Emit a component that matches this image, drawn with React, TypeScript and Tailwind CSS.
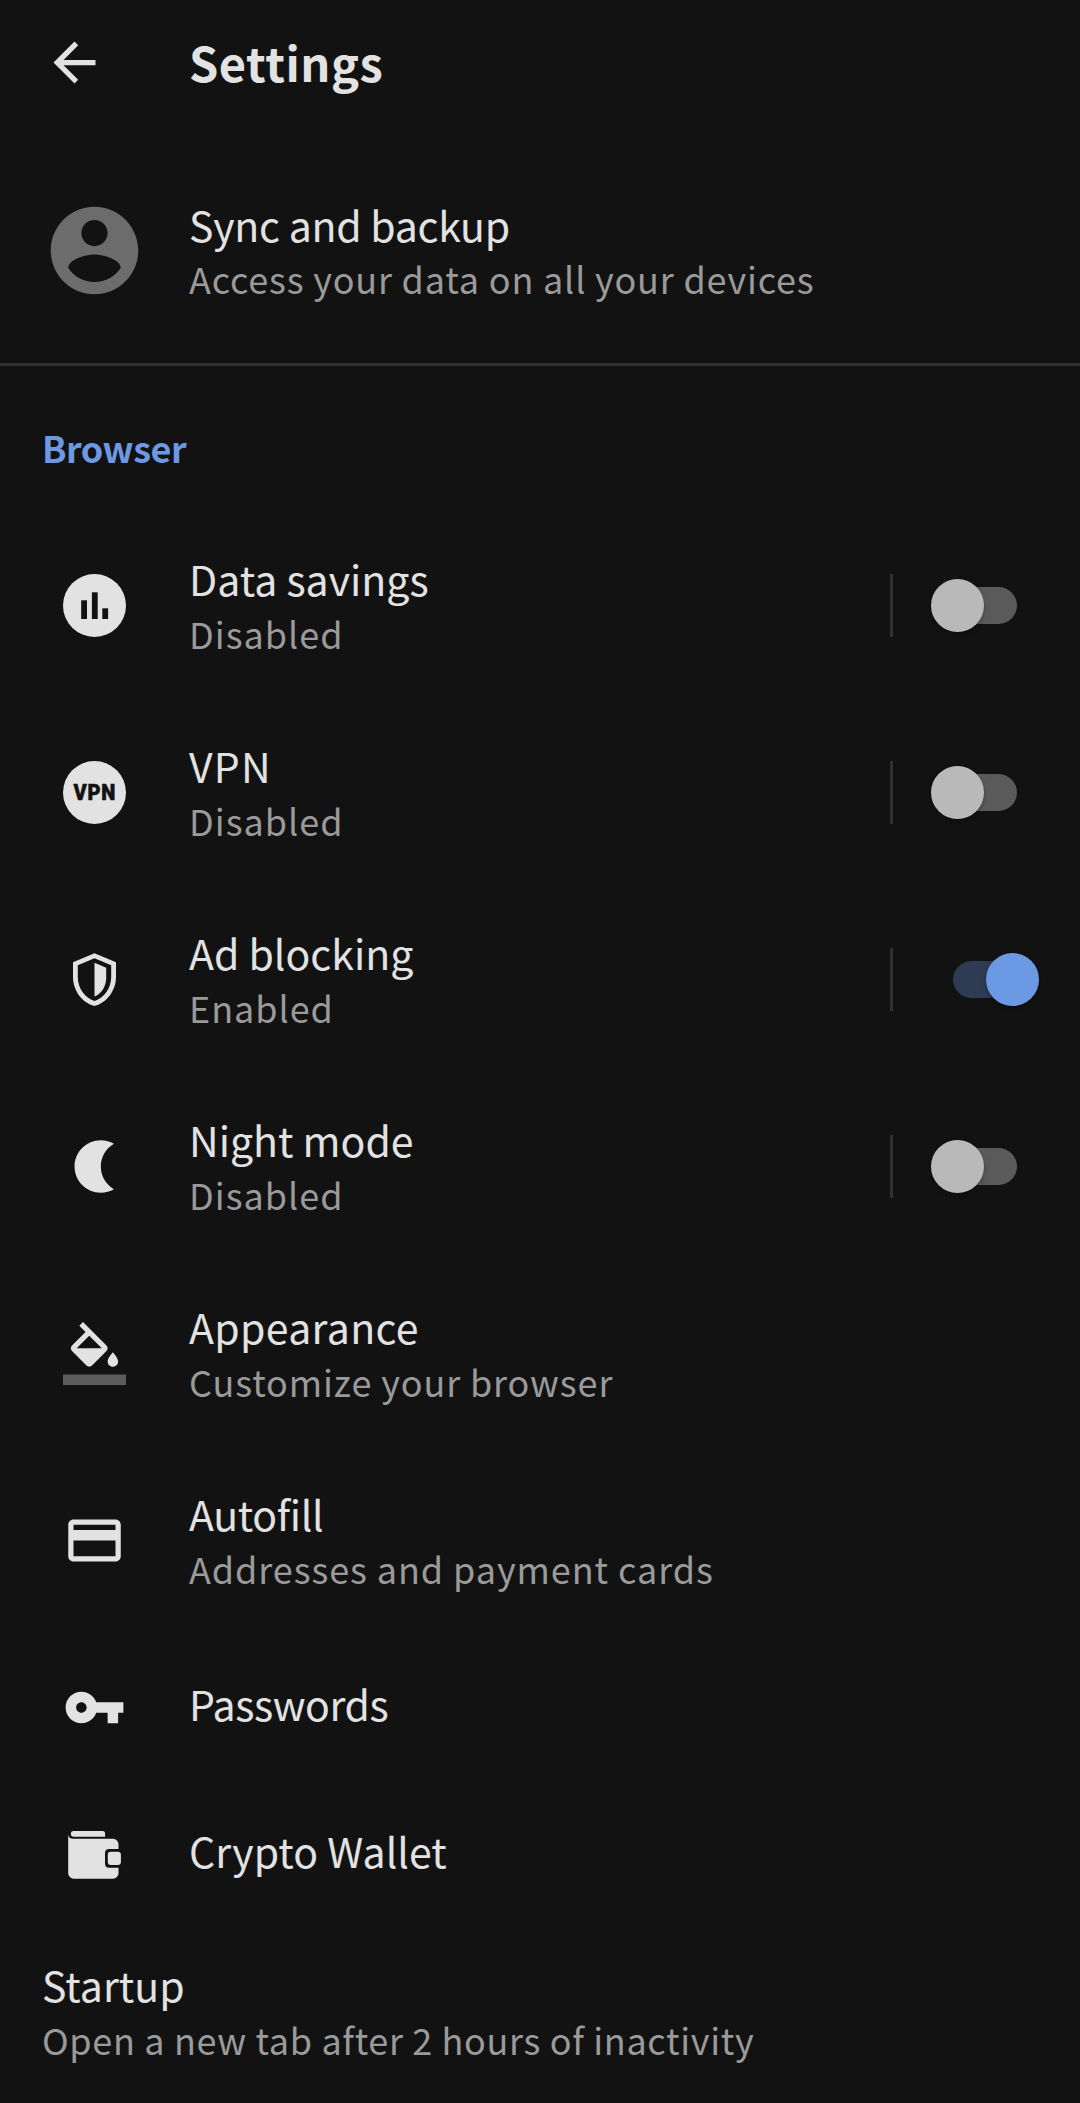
import type { ReactNode } from "react";

const INK = "#e2e2e2";

function Glyph({ d }: { d: string }) {
  return (
    <svg viewBox="0 0 24 24" className="size-[63px]" fill={INK}>
      <path d={d} />
    </svg>
  );
}

const BarsIcon = () => (
  <svg viewBox="0 0 63 63" className="size-[63px]">
    <circle cx="31.5" cy="31.5" r="31.5" fill={INK} />
    <g fill="#121212">
      <rect x="18.2" y="26.3" width="5.8" height="18.7" />
      <rect x="28.9" y="18.3" width="5.8" height="26.7" />
      <rect x="39.3" y="34.3" width="5.8" height="10.7" />
    </g>
  </svg>
);

const VpnIcon = () => (
  <div className="flex size-[63px] items-center justify-center rounded-full bg-[#e2e2e2] pl-px font-['Roboto',sans-serif] text-[21.5px] leading-none font-black tracking-[0.8px] text-[#121212] [-webkit-text-stroke:0.6px_#121212]">
    <span className="inline-block scale-x-93">VPN</span>
  </div>
);

const ShieldIcon = () => (
  <svg viewBox="0 0 63 63" className="size-[63px]" fill={INK}>
    <path
      fillRule="evenodd"
      d="M31.5 5.3 53 14.2V29C53 42.5 43.8 55 31.5 58 19.2 55 10 42.5 10 29V14.2ZM31.5 10.2 14.8 17.3V29C14.8 40 21.8 50 31.5 53 41.2 50 48.2 40 48.2 29V17.3Z"
    />
    <path d="M31.5 14.7 43.2 19.8V29.5C43.2 38 38.8 45.8 31.5 48.5Z" />
  </svg>
);

const MoonIcon = () => (
  <Glyph d="M14.4 2c1.82 0 3.53.5 5 1.35-2.99 1.73-5 4.95-5 8.65s2.01 6.92 5 8.65c-1.47.85-3.18 1.35-5 1.35-5.52 0-10-4.48-10-10s4.48-10 10-10z" />
);

const FillIcon = () => (
  <svg viewBox="0 0 24 24" className="size-[63px]" fill={INK}>
    <path d="M16.56 8.94L7.62 0 6.21 1.41l2.38 2.38-5.15 5.15c-.59.59-.59 1.54 0 2.12l5.5 5.5c.29.29.68.44 1.06.44s.77-.15 1.06-.44l5.5-5.5c.59-.58.59-1.53 0-2.12zM5.21 10L10 5.21 14.79 10H5.21zM19 11.5s-2 2.17-2 3.5c0 1.1.9 2 2 2s2-.9 2-2c0-1.33-2-3.5-2-3.5z" />
    <path d="M0 20h24v4H0z" fill="#5c5c5c" />
  </svg>
);

const CardIcon = () => (
  <Glyph d="M20 4H4c-1.11 0-1.99.89-1.99 2L2 18c0 1.11.89 2 2 2h16c1.11 0 2-.89 2-2V6c0-1.11-.89-2-2-2zm0 14H4v-6h16v6zm0-10H4V6h16v2z" />
);

const KeyIcon = () => (
  <Glyph d="M12.65 10C11.83 7.67 9.61 6 7 6c-3.31 0-6 2.69-6 6s2.69 6 6 6c2.61 0 4.83-1.67 5.65-4H17v4h4v-4h2v-4H12.65zM7 14c-1.1 0-2-.9-2-2s.9-2 2-2 2 .9 2 2-.9 2-2 2z" />
);

const WalletIcon = () => (
  <svg viewBox="0 0 63 63" className="size-[63px]" fill={INK}>
    <path d="M10.7 8H39.5a2.6 2.6 0 0 1 2.6 2.6V13.7H10.7a2.85 2.85 0 0 1 0-5.7Z" />
    <path d="M5.2 11.5C5.6 14.4 7.4 15.8 10 15.8H50a5.5 5.5 0 0 1 5.5 5.5V26H46a4 4 0 0 0-4 4V40.7a4 4 0 0 0 4 4H55.5V50.2A5.5 5.5 0 0 1 50 55.7H10.7A5.5 5.5 0 0 1 5.2 50.2Z" />
    <rect x="44.8" y="28.8" width="13.1" height="13.2" rx="3" />
  </svg>
);

function Toggle({ on }: { on: boolean }) {
  return (
    <div className="flex items-center">
      <div className="h-[63px] w-[3px] bg-[#303030]" />
      <div
        className={
          on
            ? "ml-[60px] flex h-[37px] w-[86px] items-center justify-end rounded-l-full bg-linear-to-r from-[#2e3b53] from-75% to-transparent to-75%"
            : "ml-[38px] flex h-[37px] w-[86px] items-center rounded-r-full bg-linear-to-r from-transparent from-25% to-[#5a5a5a] to-25%"
        }
      >
        <div
          className={
            on
              ? "size-[53px] shrink-0 rounded-full bg-[#6b99e4] shadow-[0_2px_4px_rgba(0,0,0,0.3)]"
              : "size-[53px] shrink-0 rounded-full bg-[#b9b9b9] shadow-[0_2px_4px_rgba(0,0,0,0.3)]"
          }
        />
      </div>
    </div>
  );
}

const Title = ({ text, className }: { text: string; className: string }) => (
  <div className={`text-[41px] leading-[54px] text-[#e2e2e2] ${className}`}>{text}</div>
);

const Sub = ({ text, className }: { text: string; className: string }) => (
  <div className={`text-[36px] leading-[54px] text-[#9a9a9a] ${className}`}>{text}</div>
);

type Item = {
  icon: ReactNode;
  title: string;
  titleClass: string;
  sub?: string;
  subClass?: string;
  on?: boolean;
};

const items: Item[] = [
  { icon: <BarsIcon />, title: "Data savings", titleClass: "", sub: "Disabled", subClass: "mt-px tracking-[1px]", on: false },
  { icon: <VpnIcon />, title: "VPN", titleClass: "tracking-[1.2px]", sub: "Disabled", subClass: "mt-px tracking-[1px]", on: false },
  { icon: <ShieldIcon />, title: "Ad blocking", titleClass: "", sub: "Enabled", subClass: "mt-px tracking-[0.95px]", on: true },
  { icon: <MoonIcon />, title: "Night mode", titleClass: "", sub: "Disabled", subClass: "mt-px tracking-[1px]", on: false },
  { icon: <FillIcon />, title: "Appearance", titleClass: "tracking-[0.34px]", sub: "Customize your browser", subClass: "mt-px tracking-[0.89px]" },
  { icon: <CardIcon />, title: "Autofill", titleClass: "tracking-[-0.35px]", sub: "Addresses and payment cards", subClass: "mt-px tracking-[0.92px]" },
  { icon: <KeyIcon />, title: "Passwords", titleClass: "tracking-[-0.42px]" },
  { icon: <WalletIcon />, title: "Crypto Wallet", titleClass: "tracking-[0.02px]" },
];

function Row({ item }: { item: Item }) {
  return (
    <li className={item.sub ? "flex h-[187px]" : "flex h-[147px]"}>
      <div className="flex w-[189px] shrink-0 items-center justify-center">{item.icon}</div>
      <div className={item.sub ? "grow pt-[39px]" : "grow pt-[42px]"}>
        <Title text={item.title} className={item.titleClass} />
        {item.sub && <Sub text={item.sub} className={item.subClass ?? ""} />}
      </div>
      {item.on !== undefined && (
        <div className="flex w-[190px] shrink-0 items-center">
          <Toggle on={item.on} />
        </div>
      )}
    </li>
  );
}

export default function App() {
  return (
    <main className="h-[2103px] w-[1080px] overflow-hidden bg-[#121212] font-['Noto_Sans_CJK_SC',sans-serif] whitespace-nowrap">
      <header className="flex h-[125px] items-center">
        <div className="w-[189px] pl-[43px]">
          <Glyph d="M20 11H7.83l5.59-5.59L12 4l-8 8 8 8 1.41-1.41L7.83 13H20v-2z" />
        </div>
        <h1 className="pb-[1px] text-[47px] leading-[60px] font-bold tracking-[0.5px] text-[#e2e2e2]">Settings</h1>
      </header>

      <section className="flex h-[241px] border-b-[3px] border-[#303030]">
        <div className="flex w-[189px] shrink-0 justify-center pt-[73px]">
          <svg viewBox="0 0 24 24" className="size-[105px]" fill="#6c6c6c">
            <path d="M12 2C6.48 2 2 6.48 2 12s4.48 10 10 10 10-4.48 10-10S17.52 2 12 2zm0 3c1.66 0 3 1.34 3 3s-1.34 3-3 3-3-1.34-3-3 1.34-3 3-3zm0 14.2c-2.5 0-4.71-1.28-6-3.22.03-1.99 4-3.08 6-3.08 1.99 0 5.97 1.09 6 3.08-1.29 1.94-3.5 3.22-6 3.22z" />
          </svg>
        </div>
        <div className="pt-[72px]">
          <Title text="Sync and backup" className="tracking-[-0.25px]" />
          <Sub text="Access your data on all your devices" className="tracking-[0.81px]" />
        </div>
      </section>

      <h2 className="h-[146px] pt-[55px] pl-[42px] text-[36px] leading-[52px] font-bold tracking-[-0.47px] text-[#6c99e2]">
        Browser
      </h2>

      <ul>
        {items.map((item) => (
          <Row key={item.title} item={item} />
        ))}
      </ul>

      <section className="pt-[29px] pl-[42px]">
        <Title text="Startup" className="" />
        <Sub text="Open a new tab after 2 hours of inactivity" className="mt-px tracking-[0.65px]" />
      </section>
    </main>
  );
}
